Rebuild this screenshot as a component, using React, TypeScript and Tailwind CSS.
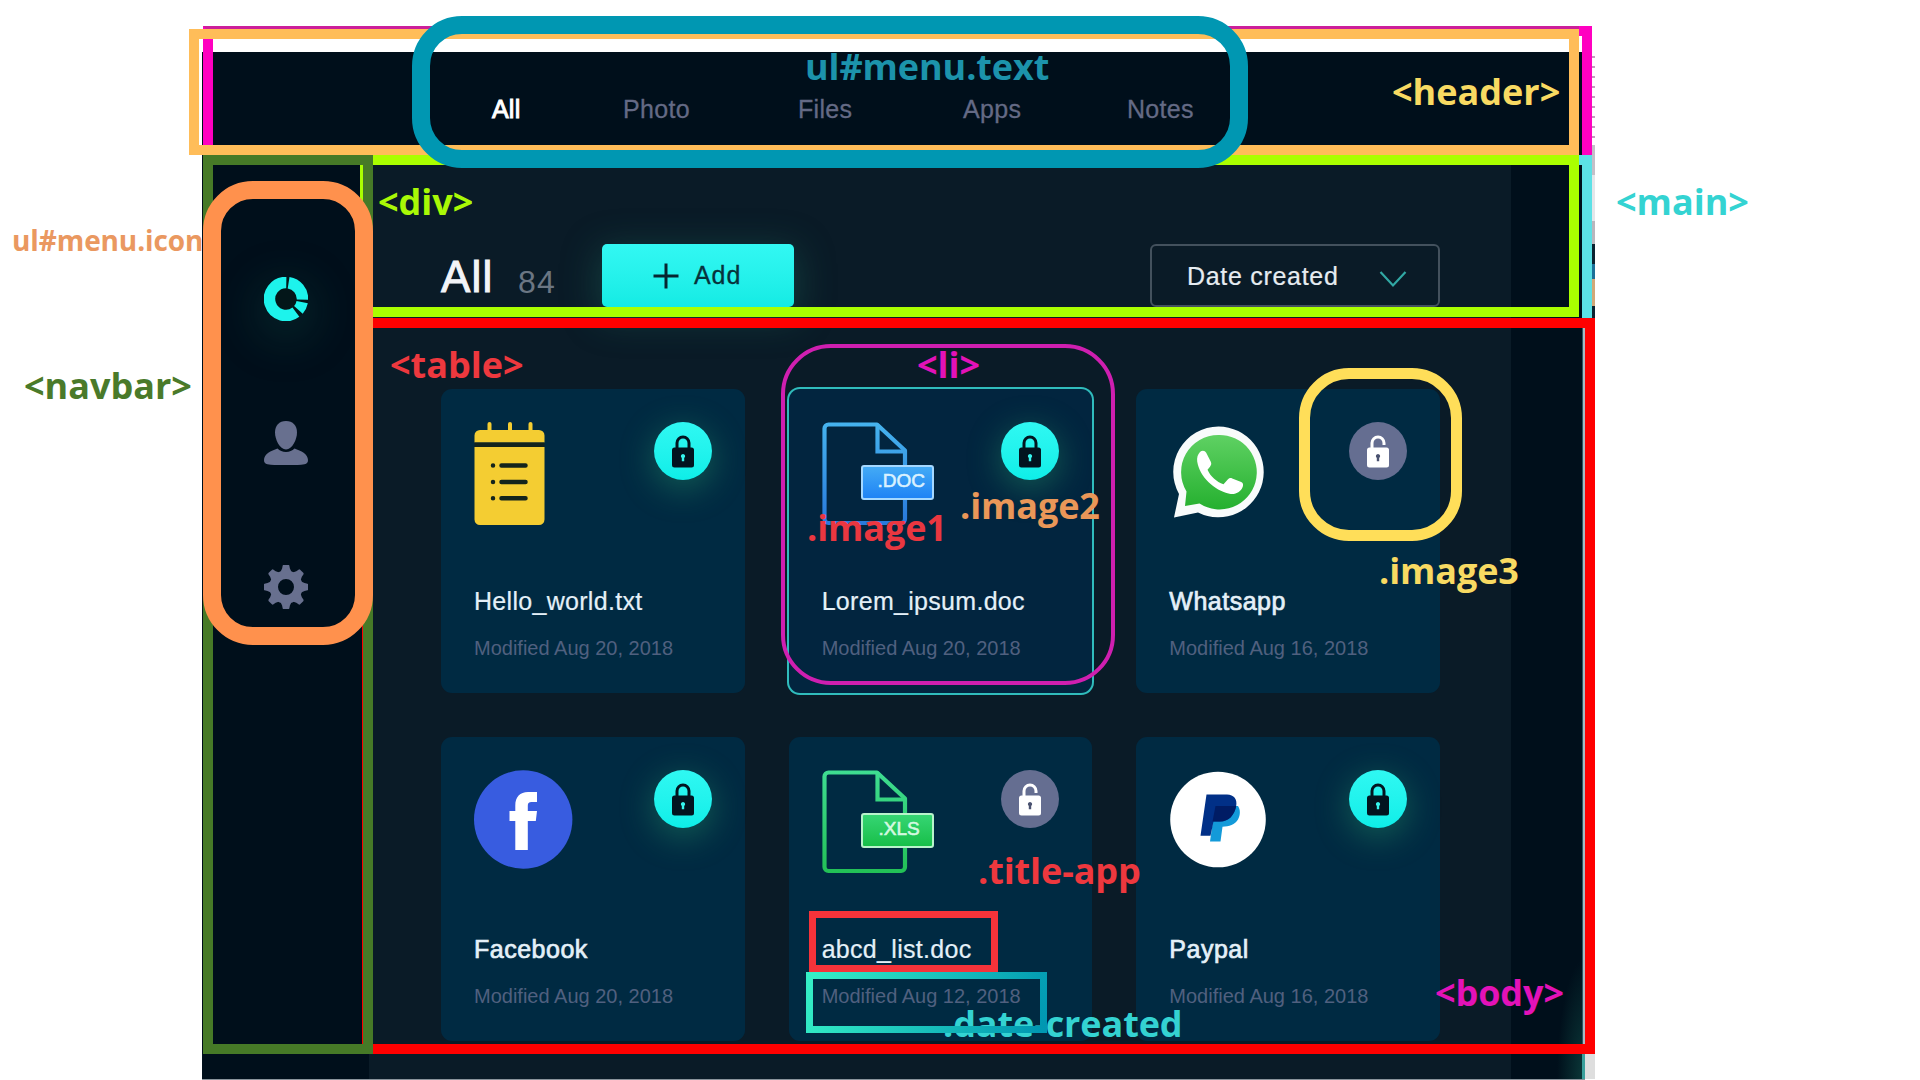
import React from "react";

type Item = {
  title: string;
  date: string;
  locked: boolean;
  medium?: boolean;
  selected?: boolean;
  icon: React.ReactNode;
};

function NotesIcon() {
  return (
    <svg width="72" height="104" viewBox="0 0 72 104" className="block">
      <g fill="#f4cd32">
        <rect x="13.500" y="0" width="4" height="12" rx="2" />
        <rect x="34" y="0" width="4" height="12" rx="2" />
        <rect x="54.500" y="0" width="4" height="12" rx="2" />
        <path d="M.5 20.500V13.500a5.500 5.500 0 0 1 5.500-5.500h59a5.500 5.500 0 0 1 5.500 5.500v7z" />
        <path d="M.5 25h70v72.500a5.500 5.500 0 0 1-5.500 5.500h-59a5.500 5.500 0 0 1-5.500-5.500z" />
      </g>
      <rect x=".5" y="20.500" width="70" height="4.500" fill="#14241c" />
      <g stroke="#14241c" strokeWidth="4.500" strokeLinecap="round">
        <path d="M19 43.500h.01M27.500 43.500h24M19 60h.01M27.500 60h24M19 76.300h.01M27.500 76.300h24" />
      </g>
    </svg>
  );
}

function FileIcon({ ext }: { ext: "DOC" | "XLS" }) {
  const doc = ext === "DOC";
  const id = "stroke" + ext;
  return (
    <div className="relative h-[104px] w-[112px]">
      <svg width="88" height="104" viewBox="0 0 88 104" className="block" fill="none">
        <defs>
          <linearGradient id={id} x1="0" y1="0" x2="0" y2="104" gradientUnits="userSpaceOnUse">
            <stop offset="0" stopColor={doc ? "#46b4ee" : "#3fdd92"} />
            <stop offset="1" stopColor={doc ? "#2878dc" : "#22c055"} />
          </linearGradient>
        </defs>
        <g stroke={`url(#${id})`} strokeWidth="4.200" strokeLinejoin="round">
          <path d="M55 2.500H6.500a4 4 0 0 0-4 4V97a4 4 0 0 0 4 4H79a4 4 0 0 0 4-4V28.500z" />
          <path d="M55.500 2.500V29.500H83" strokeLinejoin="miter" />
        </g>
      </svg>
      <div
        className={
          "absolute top-[43px] left-[39px] flex h-[35px] w-[73px] items-center justify-center rounded-[3px] border-2 text-[19px] leading-none [-webkit-text-stroke:0.6px] " +
          (doc
            ? "border-[#a5d8ff] bg-gradient-to-b from-[#43aaf5] to-[#1f83f5] pb-[4px] pl-[8px] text-[#d9f1ff]"
            : "border-[#b8f3cb] bg-gradient-to-b from-[#35d573] to-[#16bf48] pb-[4px] pl-[4px] text-[#d4f9e0]")
        }
      >
        .{ext}
      </div>
    </div>
  );
}

function WhatsappIcon() {
  return (
    <svg width="96" height="96" viewBox="-1 -1 96 96" className="block">
      <defs>
        <linearGradient id="wa" x1="0" y1="0" x2="0" y2="1">
          <stop offset="0" stopColor="#5fd163" />
          <stop offset="1" stopColor="#25b02f" />
        </linearGradient>
      </defs>
      <path
        d="M48.500 3.500a45.400 45.400 0 0 0-39.500 67.500L4 94.500 28 89.500A45.400 45.400 0 1 0 48.500 3.500z"
        fill="#f8fbfb"
      />
      <path
        d="M48.500 12a37.200 37.200 0 0 0-32 56.500L15 83 29.500 80.500A37.200 37.200 0 1 0 48.500 12z"
        fill="url(#wa)"
      />
      <path
        d="M30 29c2-2 5-1.700 6.200.8l4.600 9c1 2 .3 3.400-.8 4.900l-2.500 3c2.800 6.400 9 12.200 16 14.500l4.500-5c1.200-1.300 2.700-1.400 4.200-.8l9 3.600c1.800.8 2.200 2.200 1.700 4.200-1.600 5.800-7.800 8.700-13.400 7.500C44 67.500 29.500 53.500 27.200 38.500c-.5-4 .6-7.200 2.800-9.500z"
        fill="#fff"
      />
    </svg>
  );
}

function FacebookIcon() {
  return (
    <svg width="99" height="99" viewBox="0 0 99 99" className="block">
      <circle cx="49.200" cy="49.500" r="49.200" fill="#385ce0" />
      <path
        d="M41.300 80V51h-5.800V41h5.800v-5.500C41.300 27 46 22 54 22h9v10h-5.500c-2.700 0-3.700 1.200-3.700 3.800V41h9.200l-1.200 10h-8v29z"
        fill="#fff"
      />
    </svg>
  );
}

function PaypalIcon() {
  return (
    <svg width="98" height="98" viewBox="0 0 98 98" className="ml-[1px] block">
      <circle cx="48" cy="49.500" r="47.800" fill="#fff" />
      <path d="M45 36h23c2.500 3.500 2.500 9 0 13.500-3 5-9 7-15.500 7.300L50.500 71.500H40z" fill="#139ad9" />
      <path d="M36.500 24.500H57c7 0 10.500 5 9.200 11.500C64.500 45 59 51.500 50 51.500h-6.500L40.500 65.800H30.500z" fill="#013087" />
      <path d="M45.500 36h20.700c-2 9-7.200 15.500-16.200 15.500h-7.500z" fill="#001c64" />
    </svg>
  );
}

function LockBadge({ locked }: { locked: boolean }) {
  return (
    <div
      className={
        "flex h-[58px] w-[58px] items-center justify-center rounded-full " +
        (locked
          ? "bg-gradient-to-b from-[#2ff8f2] to-[#0deee8] shadow-[0_8px_32px_2px_rgba(40,160,110,0.4)]"
          : "bg-[#656e91]")
      }
    >
      <svg width="24" height="34" viewBox="0 0 24 34" fill="none">
        <path
          d={locked ? "M6 15V9a6 6 0 0 1 12 0v6" : "M6 15V9a6 6 0 0 1 12 0v2"}
          stroke={locked ? "#02141f" : "#fff"}
          strokeWidth="3"
        />
        <rect x="1" y="13.500" width="22" height="20" rx="2.500" fill={locked ? "#02141f" : "#fff"} />
        <path d="M12 20a2.200 2.200 0 0 1 1.200 4v3.300h-2.400V24a2.200 2.200 0 0 1 1.200-4z" fill={locked ? "#35f5ee" : "#4a5270"} />
      </svg>
    </div>
  );
}

const items: Item[] = [
  { title: "Hello_world.txt", date: "Modified Aug 20, 2018", locked: true, icon: <NotesIcon /> },
  { title: "Lorem_ipsum.doc", date: "Modified Aug 20, 2018", locked: true, selected: true, icon: <FileIcon ext="DOC" /> },
  { title: "Whatsapp", date: "Modified Aug 16, 2018", locked: false, medium: true, icon: <WhatsappIcon /> },
  { title: "Facebook", date: "Modified Aug 20, 2018", locked: true, medium: true, icon: <FacebookIcon /> },
  { title: "abcd_list.doc", date: "Modified Aug 12, 2018", locked: false, icon: <FileIcon ext="XLS" /> },
  { title: "Paypal", date: "Modified Aug 16, 2018", locked: true, medium: true, icon: <PaypalIcon /> },
];

function Card({ item }: { item: Item }) {
  return (
    <li
      className={
        "flex h-[304px] flex-col rounded-[11px] px-[33px] pt-[33px] " +
        (item.selected ? "bg-[#02253f] shadow-[0_0_0_2px_#30bcbc]" : "bg-[#002a42]")
      }
    >
      <div className="flex h-[157px] justify-between">
        {item.icon}
        <LockBadge locked={item.locked} />
      </div>
      <h3
        className={
          "h-[47px] text-[25px] leading-[44px] whitespace-nowrap text-[#e4f0f8] " +
          (item.medium ? "tracking-[0.5px] [-webkit-text-stroke:0.7px]" : "tracking-[0.3px] [-webkit-text-stroke:0.2px]")
        }
      >
        {item.title}
      </h3>
      <p className="text-[20px] leading-[44px] tracking-[0px] whitespace-nowrap text-[#50607f]">{item.date}</p>
    </li>
  );
}

function Dashboard() {
  return (
    <div className="ml-[202px] flex h-[1028px] w-[1383px] flex-col border-b border-[#8a949c] bg-[#000f1b] font-['Liberation_Sans',Arial,sans-serif]">
      <header className="h-[106px] shrink-0 pt-[40px] pl-[290px]">
        <ul className="flex text-[25px] leading-[34px] tracking-[0.3px] text-[#646a85] [-webkit-text-stroke:0.3px]">
          <li className="w-[131px] tracking-[0.2px] text-white [-webkit-text-stroke:1px]">All</li>
          <li className="w-[175px]">Photo</li>
          <li className="w-[165px]">Files</li>
          <li className="w-[164px]">Apps</li>
          <li>Notes</li>
        </ul>
      </header>
      <div className="flex min-h-0 flex-1">
        <nav className="w-[167px] shrink-0 pt-[119px]">
          <ul className="flex flex-col items-center gap-[100px]">
            <li className="h-[44px] w-[44px] rounded-full shadow-[0_12px_44px_8px_rgba(20,90,80,0.28)]">
              <svg width="44" height="44" viewBox="-22 -22 44 44" fill="none">
                <circle r="22" fill="#031619" />
                <g stroke="#1df3ec" strokeWidth="11.500">
                  <path d="M2.600 -16.300A16.500 16.500 0 0 1 16.500 0.600" />
                  <path d="M16.200 3.200A16.500 16.500 0 0 1 12.400 10.900" />
                  <path d="M9.900 13.200A16.500 16.500 0 1 1 0.300 -16.500" />
                </g>
              </svg>
            </li>
            <li className="h-[44px] w-[44px]">
              <svg width="44" height="44" viewBox="0 0 44 44" fill="#68708f">
                <path d="M22 0c6.800 0 11 4.600 11 11.500S28.200 28.500 22 28.500 11 18.500 11 11.500 15.200 0 22 0z" />
                <path d="M13.500 27.500c2.200 2.300 5 3.500 8.500 3.500s6.300-1.200 8.500-3.500c6.500 2.300 13.500 5.500 13.500 11.500 0 2.500-1 3.700-3.500 4.200-11 1.700-26 1.700-37 0C1 42.700 0 41.500 0 39c0-6 7-9.200 13.500-11.500z" />
              </svg>
            </li>
            <li className="h-[44px] w-[44px]">
              <svg width="44" height="44" viewBox="-22 -22 44 44" fill="#68708f">
                {[0, 45, 90, 135, 180, 225, 270, 315].map((a) => (
                  <path
                    key={a}
                    transform={`rotate(${a})`}
                    d="M-6.500 -13L-3.900 -18.500L-3.300 -21.500Q-3 -22.200 -2.200 -22.200H2.200Q3 -22.200 3.300 -21.500L3.900 -18.500L6.500 -13z"
                  />
                ))}
                <circle r="12.300" fill="none" stroke="#68708f" strokeWidth="8.600" />
              </svg>
            </li>
          </ul>
        </nav>
        <main className="w-[1142px] shrink-0 bg-[#0a1b27] pl-[72px]">
          <div className="flex h-[149px] w-[999px] items-end">
            <h1 className="w-[77px] text-[44px] leading-[60px] tracking-[1.2px] text-[#f2f4f8] [-webkit-text-stroke:1px]">
              All
            </h1>
            <span className="w-[84px] text-[32px] leading-[50px] tracking-[1.2px] text-[#6b7683]">84</span>
            <button className="flex h-[63px] w-[192px] items-center rounded-[5px] bg-gradient-to-b from-[#32f8f3] to-[#13ebe4] pl-[51px] text-[25px] text-[#07323b] shadow-[0_8px_36px_4px_rgba(30,110,95,0.4)]">
              <svg width="26" height="26" viewBox="0 0 26 26" stroke="#062630" strokeWidth="3">
                <path d="M13 .5v25M.5 13h25" />
              </svg>
              <span className="mt-px ml-[15px] tracking-[0.9px] [-webkit-text-stroke:0.3px]">Add</span>
            </button>
            <button className="ml-auto flex h-[63px] w-[290px] items-center rounded-[6px] border-2 border-[#43515d] pl-[35px] text-[25px] tracking-[0.7px] text-[#e6ecf1]">
              <span className="mt-[2px] w-[150px] whitespace-nowrap [-webkit-text-stroke:0.2px]">Date created</span>
              <svg width="28" height="18" viewBox="0 0 28 18" fill="none" stroke="#31a8a4" strokeWidth="2.200" className="mt-[7px] ml-[42px]">
                <path d="M1.500 2L14 15.500L26.500 2" />
              </svg>
            </button>
          </div>
          <ul className="mt-[82px] grid w-[999px] grid-cols-3 gap-[44px]">
            {items.map((item) => (
              <Card key={item.title} item={item} />
            ))}
          </ul>
        </main>
        <aside className="flex-1 bg-[radial-gradient(ellipse_28px_120px_at_100%_100%,#0b3a3a,#000f1b)]" />
      </div>
    </div>
  );
}

/* Coloured outlines and tag names laid over the dashboard. */
function Annotations() {
  return (
    <div className="absolute inset-0 font-['Open_Sans','Noto_Sans',sans-serif] text-[36px] leading-none font-bold whitespace-nowrap">
      <div className="absolute top-[52px] left-[1592px] flex w-[3px] flex-col">
        <div className="h-[93px] bg-[repeating-linear-gradient(180deg,#ffffff_0px_4px,#c79abf_4px_6px,#ffffff_6px_10px)]" />
        <div className="h-[30px] bg-[#c4bfc8]" />
        <div className="h-[46px] bg-[#e4e6ea]" />
        <div className="h-[23px] bg-[#b9b6bd]" />
        <div className="h-[20px] bg-[#0c2230]" />
        <div className="h-[15px] bg-[#1c6f98]" />
        <div className="h-[27px] bg-[#d3a878]" />
        <div className="h-[12px] bg-[#0c2230]" />
      </div>
      <div className="absolute top-[328px] left-[1582px] flex w-[13px] flex-col">
        <div className="h-[726px] w-[3px] border-l border-[#2c5a66] bg-[#a9b9c2]" />
        <div className="h-[25px] border-l-[3px] border-[#3aa09c] bg-[#dedede]" />
      </div>

      <div className="absolute top-[26px] left-[203px] h-[139px] w-[1389px] border-[10px] border-b-0 border-[#ff00c0] border-t-[#cc1f9a]" />
      <div className="absolute top-[26px] left-[1579px] h-[10px] w-[13px] bg-[#ff00c0]" />
      <div className="absolute top-[155px] left-[203px] h-[163px] w-[1389px] border-[10px] border-b-0 border-[#5ce1e6]" />
      <div className="absolute top-[155px] left-[360px] h-[162px] w-[1219px] border-[10px] border-[#aaff00] border-l-[3px] pt-[19px] pl-[15px] text-[#a9f906]">
        &lt;div&gt;
      </div>
      <div className="absolute top-[318px] left-[362px] h-[736px] w-[1233px] border-[10px] border-[#ff0000] pt-[19px] pl-[18px] text-[#ee383e]">
        &lt;table&gt;
      </div>
      <div className="absolute top-[155px] left-[203px] h-[899px] w-[170px] border-[10px] border-[#467a27] [clip-path:polygon(0_0,100%_0,100%_100%,0_100%)]" />
      <div className="absolute top-[29px] left-[189px] h-[126px] w-[1390px] border-[10px] border-[#ffbd59] pt-[35px] pl-[1193px] text-[#f8da62]">
        &lt;header&gt;
      </div>
      <div className="absolute top-[181px] left-[203px] h-[464px] w-[170px] rounded-[50px] border-[18px] border-[#ff914d]" />
      <div className="absolute top-[16px] left-[412px] h-[152px] w-[836px] rounded-[50px] border-[18px] border-[#0097b2] pt-[15px] pl-[375px] tracking-[-0.1px] text-[#1c93ab]">
        ul#menu.text
      </div>
      <div className="absolute top-[344px] left-[781px] h-[341px] w-[334px] rounded-[50px] border-4 border-[#cf1fb0] pl-[132px] leading-[34px] text-[#e312b8]">
        &lt;li&gt;
      </div>
      <div className="absolute top-[368px] left-[1299px] h-[173px] w-[163px] rounded-[50px] border-[11px] border-[#ffde59]" />
      <div className="absolute top-[911px] left-[809px] h-[61px] w-[189px] border-[7px] border-[#f5333a]" />

      <span className="absolute top-[224px] left-[12px] w-[190px] overflow-hidden text-[28px] leading-[32px] tracking-[-0.100px] text-[#ea9860]">
        ul#menu.icon
      </span>
      <span className="absolute top-[184px] left-[1616px] text-[#34d3d2]">&lt;main&gt;</span>
      <span className="absolute top-[368px] left-[24px] text-[#4a7a2a]">&lt;navbar&gt;</span>
      <span className="absolute top-[510px] left-[807px] tracking-[-0.100px] text-[#ea3740]">.image1</span>
      <span className="absolute top-[488px] left-[960px] tracking-[-0.100px] text-[#ea9758]">.image2</span>
      <span className="absolute top-[553px] left-[1379px] tracking-[-0.100px] text-[#f8da62]">.image3</span>
      <span className="absolute top-[853px] left-[978px] tracking-[-0.100px] text-[#ee383e]">.title-app</span>
      <span className="absolute top-[1006px] left-[943px] tracking-[-0.100px] text-[#34d3d2]">.date-created</span>
      <span className="absolute top-[975px] left-[1435px] tracking-[-0.100px] text-[#e312b8]">&lt;body&gt;</span>
      <div className="absolute top-[972px] left-[806px] h-[61px] w-[241px] border-[7px] [border-image:linear-gradient(110deg,#35efc6,#0097b2)_1]" />
    </div>
  );
}

export default function App() {
  return (
    <div className="relative h-[1080px] w-[1920px] overflow-hidden bg-white pt-[52px]">
      <Dashboard />
      <Annotations />
    </div>
  );
}
